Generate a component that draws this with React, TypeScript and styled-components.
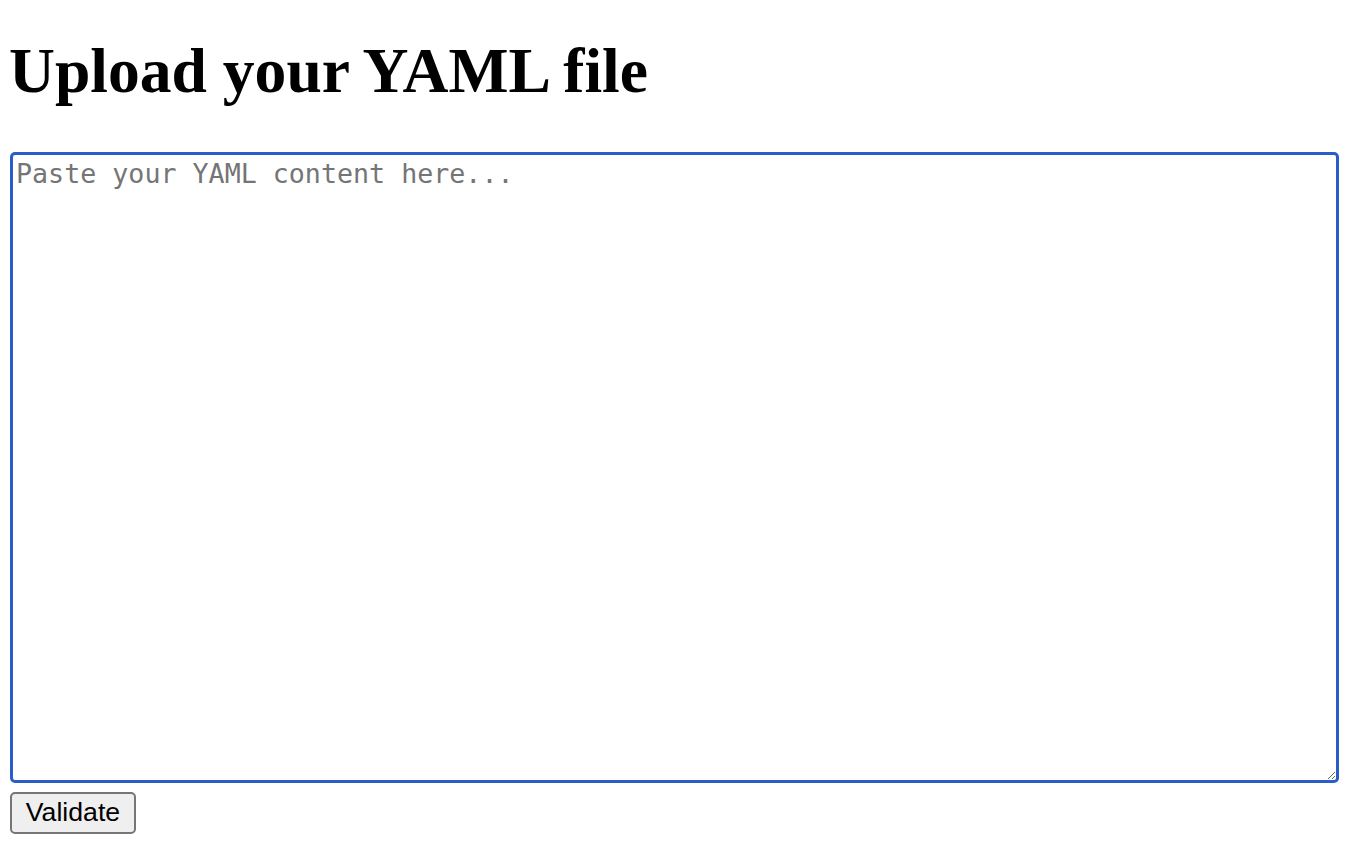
import React from 'react'
import styled, { createGlobalStyle } from 'styled-components'

const GlobalStyle = createGlobalStyle`
  html, body {
    margin: 0;
    padding: 0;
    background: #ffffff;
  }
`

const Page = styled.div`
  display: flex;
  flex-direction: column;
  align-items: flex-start;
  padding: 34px 10px 0 10px;
`

const Title = styled.h1`
  margin: 0 0 0 -1px;
  font-family: 'Liberation Serif', 'Times New Roman', serif;
  font-size: 63.6px;
  font-weight: 700;
  line-height: 1.157;
  color: #000;
`

const YamlInput = styled.textarea`
  box-sizing: border-box;
  margin-top: 44px;
  width: 1329px;
  height: 631px;
  padding: 3px 3px;
  border: 3px solid #2a5dc8;
  border-radius: 5px;
  outline: none;
  background: #fff;
  font-family: 'DejaVu Sans Mono', 'Liberation Mono', monospace;
  font-size: 26.67px;
  line-height: 1.2;
  color: #000;
  resize: both;

  &::placeholder {
    color: #757575;
  }
`

const Button = styled.button`
  box-sizing: border-box;
  margin-top: 9px;
  width: 126px;
  height: 42px;
  padding: 0;
  border: 2px solid #767676;
  border-radius: 5px;
  background: #efefef;
  font-family: 'Liberation Sans', Arial, sans-serif;
  font-size: 26.67px;
  color: #000;
  cursor: pointer;
`

const App = () => {
  return (
    <>
      <GlobalStyle />
      <Page>
        <Title>Upload your YAML file</Title>
        <YamlInput placeholder="Paste your YAML content here..." />
        <Button>Validate</Button>
      </Page>
    </>
  )
}

export default App
